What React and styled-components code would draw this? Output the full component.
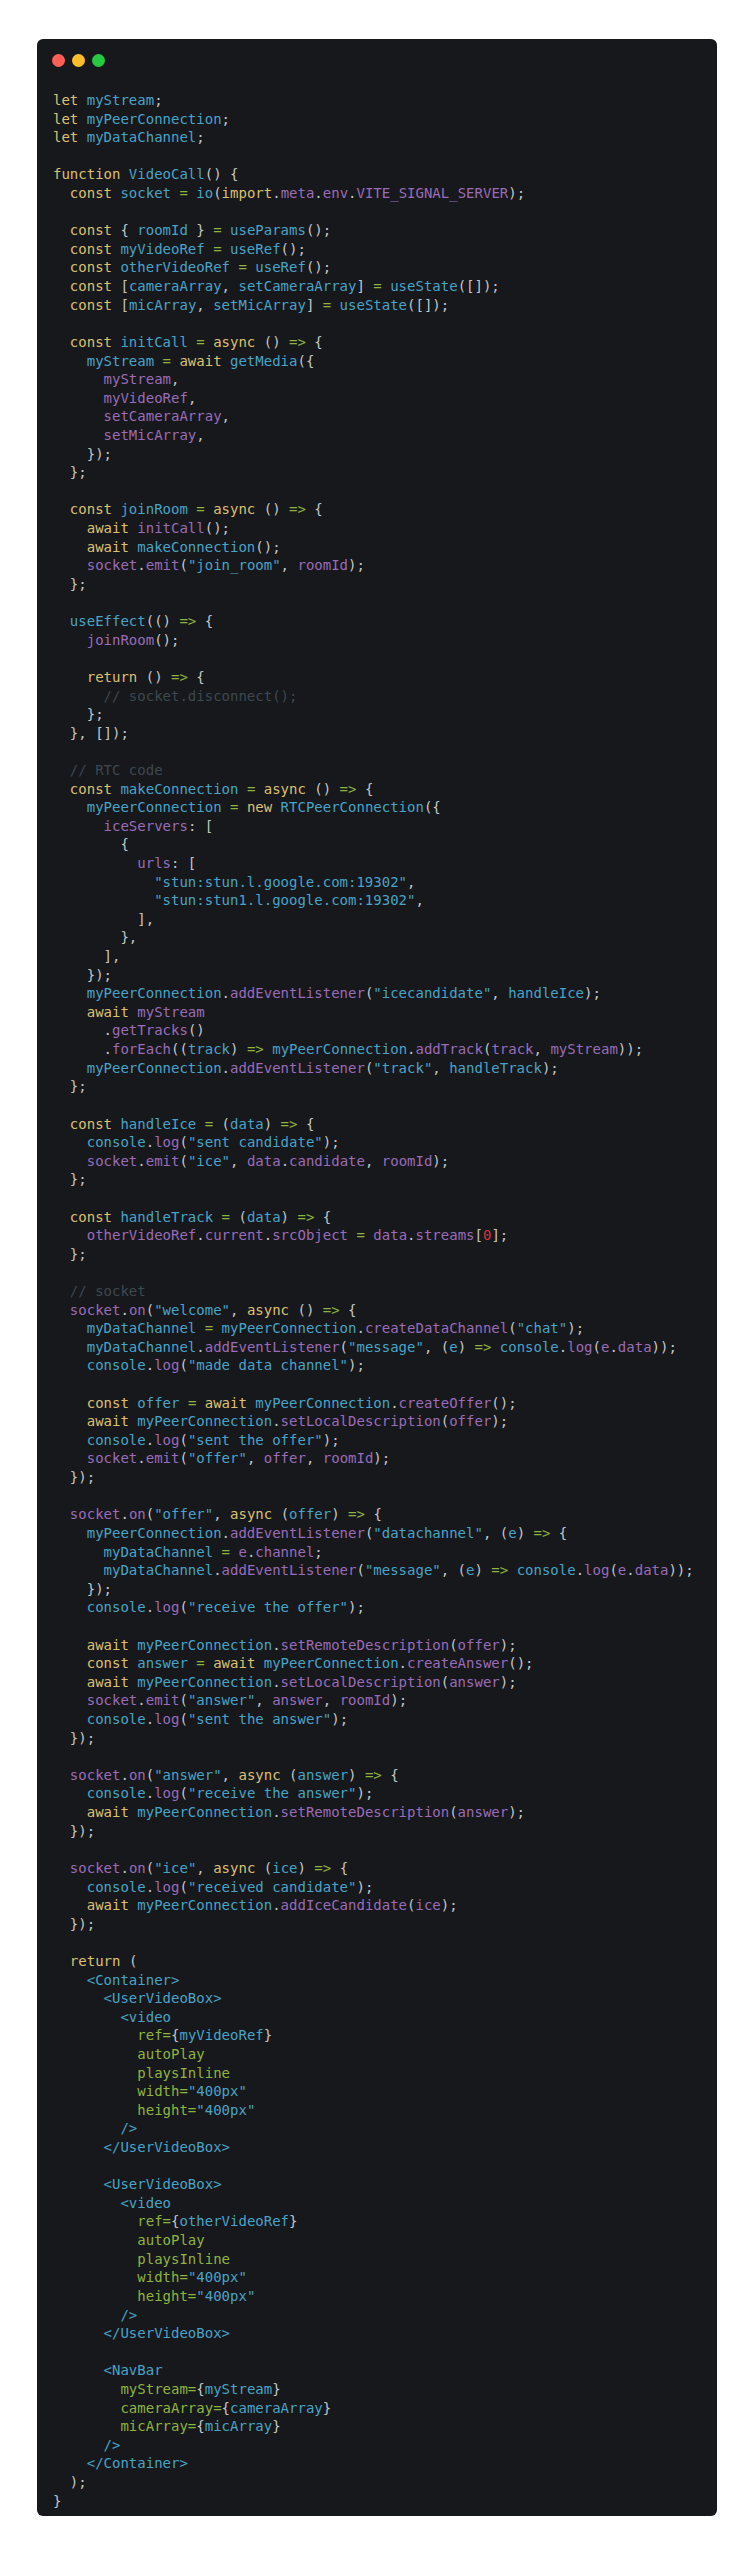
import React from 'react';
import styled, { createGlobalStyle } from 'styled-components';

const colors = {
  k: '#dcc072',
  b: '#4aa3c7',
  v: '#9a6cb8',
  g: '#8fb33f',
  p: '#c4c7c9',
  c: '#3d4850',
  r: '#d6363c',
};

// one token per "|", first letter is the colour key in `colors`
const source = `klet |bmyStream|p;
klet |bmyPeerConnection|p;
klet |bmyDataChannel|p;

kfunction |bVideoCall|p() {
p  |kconst |bsocket |g= |bio|p(|kimport|p.|vmeta|p.|venv|p.|vVITE_SIGNAL_SERVER|p);

p  |kconst |p{ |broomId |p} |g= |buseParams|p();
p  |kconst |bmyVideoRef |g= |buseRef|p();
p  |kconst |botherVideoRef |g= |buseRef|p();
p  |kconst |p[|bcameraArray|p, |bsetCameraArray|p] |g= |buseState|p([]);
p  |kconst |p[|bmicArray|p, |bsetMicArray|p] |g= |buseState|p([]);

p  |kconst |binitCall |g= |kasync |p() |g=> |p{
p    |bmyStream |g= |kawait |bgetMedia|p({
p      |vmyStream|p,
p      |vmyVideoRef|p,
p      |vsetCameraArray|p,
p      |vsetMicArray|p,
p    });
p  };

p  |kconst |bjoinRoom |g= |kasync |p() |g=> |p{
p    |kawait |vinitCall|p();
p    |kawait |bmakeConnection|p();
p    |vsocket|p.|vemit|p(|b"join_room"|p, |vroomId|p);
p  };

p  |buseEffect|p(() |g=> |p{
p    |vjoinRoom|p();

p    |kreturn |p() |g=> |p{
p      |c// socket.disconnect();
p    };
p  }, []);

p  |c// RTC code
p  |kconst |bmakeConnection |g= |kasync |p() |g=> |p{
p    |bmyPeerConnection |g= |knew |bRTCPeerConnection|p({
p      |viceServers|p: [
p        {
p          |vurls|p: [
p            |b"stun:stun.l.google.com:19302"|p,
p            |b"stun:stun1.l.google.com:19302"|p,
p          ],
p        },
p      ],
p    });
p    |bmyPeerConnection|p.|vaddEventListener|p(|b"icecandidate"|p, |bhandleIce|p);
p    |kawait |vmyStream
p      .|vgetTracks|p()
p      .|vforEach|p((|btrack|p) |g=> |bmyPeerConnection|p.|vaddTrack|p(|vtrack|p, |vmyStream|p));
p    |bmyPeerConnection|p.|vaddEventListener|p(|b"track"|p, |bhandleTrack|p);
p  };

p  |kconst |bhandleIce |g= |p(|bdata|p) |g=> |p{
p    |bconsole|p.|vlog|p(|b"sent candidate"|p);
p    |vsocket|p.|vemit|p(|b"ice"|p, |vdata|p.|vcandidate|p, |vroomId|p);
p  };

p  |kconst |bhandleTrack |g= |p(|bdata|p) |g=> |p{
p    |votherVideoRef|p.|vcurrent|p.|vsrcObject |g= |vdata|p.|vstreams|p[|r0|p];
p  };

p  |c// socket
p  |vsocket|p.|von|p(|b"welcome"|p, |kasync |p() |g=> |p{
p    |bmyDataChannel |g= |bmyPeerConnection|p.|vcreateDataChannel|p(|b"chat"|p);
p    |bmyDataChannel|p.|vaddEventListener|p(|b"message"|p, (|be|p) |g=> |bconsole|p.|vlog|p(|ve|p.|vdata|p));
p    |bconsole|p.|vlog|p(|b"made data channel"|p);

p    |kconst |boffer |g= |kawait |bmyPeerConnection|p.|vcreateOffer|p();
p    |kawait |bmyPeerConnection|p.|vsetLocalDescription|p(|voffer|p);
p    |bconsole|p.|vlog|p(|b"sent the offer"|p);
p    |vsocket|p.|vemit|p(|b"offer"|p, |voffer|p, |vroomId|p);
p  });

p  |vsocket|p.|von|p(|b"offer"|p, |kasync |p(|boffer|p) |g=> |p{
p    |bmyPeerConnection|p.|vaddEventListener|p(|b"datachannel"|p, (|be|p) |g=> |p{
p      |bmyDataChannel |g= |ve|p.|vchannel|p;
p      |bmyDataChannel|p.|vaddEventListener|p(|b"message"|p, (|be|p) |g=> |bconsole|p.|vlog|p(|ve|p.|vdata|p));
p    });
p    |bconsole|p.|vlog|p(|b"receive the offer"|p);

p    |kawait |bmyPeerConnection|p.|vsetRemoteDescription|p(|voffer|p);
p    |kconst |banswer |g= |kawait |bmyPeerConnection|p.|vcreateAnswer|p();
p    |kawait |bmyPeerConnection|p.|vsetLocalDescription|p(|vanswer|p);
p    |vsocket|p.|vemit|p(|b"answer"|p, |vanswer|p, |vroomId|p);
p    |bconsole|p.|vlog|p(|b"sent the answer"|p);
p  });

p  |vsocket|p.|von|p(|b"answer"|p, |kasync |p(|banswer|p) |g=> |p{
p    |bconsole|p.|vlog|p(|b"receive the answer"|p);
p    |kawait |bmyPeerConnection|p.|vsetRemoteDescription|p(|vanswer|p);
p  });

p  |vsocket|p.|von|p(|b"ice"|p, |kasync |p(|bice|p) |g=> |p{
p    |bconsole|p.|vlog|p(|b"received candidate"|p);
p    |kawait |bmyPeerConnection|p.|vaddIceCandidate|p(|vice|p);
p  });

p  |kreturn |p(
p    |b<Container>
p      |b<UserVideoBox>
p        |b<video
p          |gref=|p{|bmyVideoRef|p}
p          |gautoPlay
p          |gplaysInline
p          |gwidth=|b"400px"
p          |gheight=|b"400px"
p        |b/>
p      |b</UserVideoBox>

p      |b<UserVideoBox>
p        |b<video
p          |gref=|p{|botherVideoRef|p}
p          |gautoPlay
p          |gplaysInline
p          |gwidth=|b"400px"
p          |gheight=|b"400px"
p        |b/>
p      |b</UserVideoBox>

p      |b<NavBar
p        |gmyStream=|p{|bmyStream|p}
p        |gcameraArray=|p{|bcameraArray|p}
p        |gmicArray=|p{|bmicArray|p}
p      |b/>
p    |b</Container>
p  );
p}`;

const lines = source.split('\n').map((line) =>
  line ? line.split('|').map((t) => [t[0], t.slice(1)]) : []
);

const App = () => {
  return (
    <Page>
      <GlobalStyle />
      <Window>
        <TitleBar>
          <Dot $color="#ff5f56" />
          <Dot $color="#ffbd2e" />
          <Dot $color="#27c93f" />
        </TitleBar>
        <Code>
          {lines.map((tokens, i) => (
            <Line key={i}>
              {tokens.map(([kind, text], j) => (
                <Token key={j} $kind={kind}>{text}</Token>
              ))}
            </Line>
          ))}
        </Code>
      </Window>
    </Page>
  );
};

const GlobalStyle = createGlobalStyle`
  body {
    margin: 0;
    background: #ffffff;
  }
`;

const Page = styled.div`
  padding: 39px 37px;
`;

const Window = styled.div`
  background-color: #16181b;
  border-radius: 6px;
  padding: 15px 15px 6px;
`;

const TitleBar = styled.div`
  display: flex;
  gap: 7px;
  margin-bottom: 24px;
`;

const Dot = styled.span`
  width: 13px;
  height: 13px;
  border-radius: 50%;
  background-color: ${(props) => props.$color};
`;

const Code = styled.pre`
  margin: 0;
  padding-left: 1px;
  font-family: "DejaVu Sans Mono", monospace;
  font-size: 14px;
  line-height: 18.61px;
`;

const Line = styled.div`
  min-height: 18.61px;
`;

const Token = styled.span`
  color: ${(props) => colors[props.$kind]};
`;

export default App;
